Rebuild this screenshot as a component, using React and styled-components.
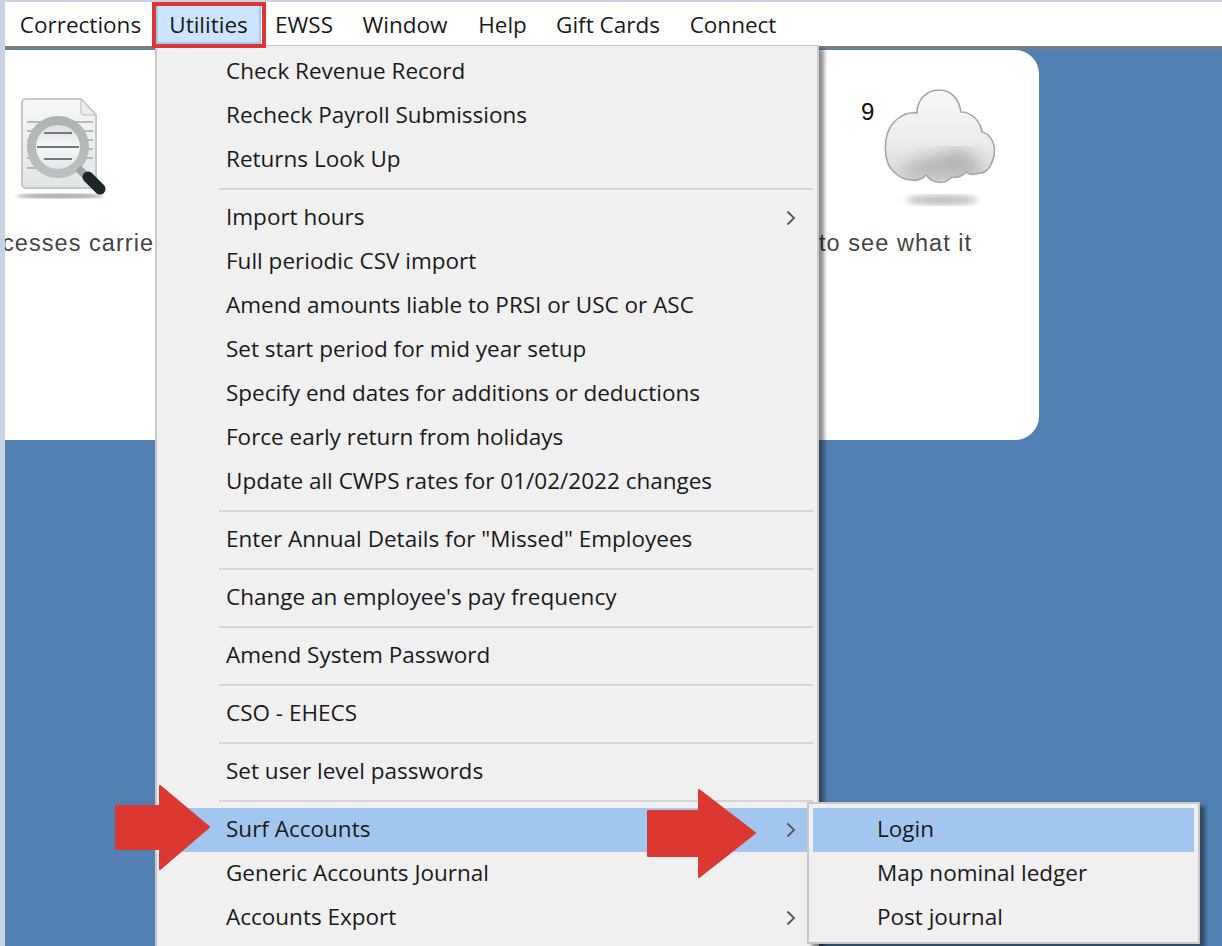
import styled, { createGlobalStyle } from 'styled-components'

const GlobalStyle = createGlobalStyle`
  html, body {
    margin: 0;
    padding: 0;
    background: #c8d4e4;
  }
`;

const UI_FONT = `"Open Sans", "Noto Sans", sans-serif`;

const Page = styled.div`
  position: relative;
  width: 1222px;
  height: 946px;
  overflow: hidden;
  padding: 2px 0 0 5px;
  box-sizing: border-box;
  display: flex;
  flex-direction: column;
  background: #c8d4e4;
  font-family: ${UI_FONT};
`;

const MenuBar = styled.div`
  display: flex;
  height: 44px;
  flex: none;
  background: #fff;
  border-bottom: 3px solid #7d7d7d;
  box-sizing: content-box;
`;

const BarItem = styled.div`
  position: relative;
  display: flex;
  align-items: center;
  justify-content: center;
  width: ${({ $w }) => $w}px;
  font-size: 22.5px;
  color: #1a1a1a;
  ${({ $active }) => $active && `
    background: #cce4fd;
    box-shadow: inset 2px 0 #a0c8f2, inset -2px 0 #a0c8f2, inset 0 -4px #a0c8f2;
    &::after {
      content: '';
      position: absolute;
      inset: 0 -5px -2px -4px;
      border: 4px solid #dc3533;
      z-index: 2;
    }
  `}
`;

const Workspace = styled.div`
  flex: 1;
  background: #5380b3;
  padding-top: 1px;
`;

const Card = styled.div`
  width: 1034px;
  height: 390px;
  background: #fff;
  border-radius: 0 24px 24px 0;
  display: flex;
  justify-content: space-between;
  overflow: hidden;
`;

const Panel = styled.div`
  display: flex;
  flex-direction: column;
  width: ${({ $w }) => $w}px;
  padding-top: ${({ $top }) => $top}px;
  box-sizing: border-box;
  overflow: hidden;
`;

const IconRow = styled.div`
  display: flex;
  height: ${({ $h }) => $h}px;
  padding-left: ${({ $left }) => $left}px;
`;

const Number = styled.span`
  font-family: "Liberation Sans", sans-serif;
  font-size: 24px;
  line-height: 24px;
  width: 18px;
  margin-top: 15px;
  color: #111;
`;

const Caption = styled.div`
  font-family: "Liberation Sans", sans-serif;
  font-size: 23.5px;
  letter-spacing: 1.05px;
  line-height: 30px;
  color: #444;
  white-space: nowrap;
  margin-left: ${({ $shift }) => $shift || 0}px;
`;

const Menu = styled.div`
  position: absolute;
  left: 155px;
  top: 45px;
  width: 664px;
  height: 920px;
  box-sizing: border-box;
  padding: 4px 4px 0 4px;
  background: #f0f0f0;
  border: 2px solid #c9c9c9;
  border-top-width: 1px;
  box-shadow: 5px 4px 4px rgba(0, 0, 0, 0.45);
  font-size: 22.5px;
  color: #1a1a1a;
`;

const Row = styled.div`
  display: flex;
  align-items: center;
  justify-content: space-between;
  height: 44px;
  box-sizing: border-box;
  padding: 0 17px 4px ${({ $indent }) => $indent}px;
  background: ${({ $hot }) => ($hot ? '#a3c6ef' : 'transparent')};
`;

const Separator = styled.div`
  height: 2px;
  margin: 6px 0 6px 58px;
  background: #d4d4d4;
`;

const Submenu = styled.div`
  position: absolute;
  left: 650px;
  top: 756px;
  width: 393px;
  height: 142px;
  box-sizing: border-box;
  padding: 4px;
  background: #f0f0f0;
  border: 2px solid #c9c9c9;
  box-shadow: 5px 4px 4px rgba(0, 0, 0, 0.45);
`;

const Chevron = styled.svg`
  width: 10px;
  height: 16px;
  flex: none;
  margin-top: 4px;
`;

const Pointer = styled.svg`
  position: absolute;
  left: ${({ $x }) => $x}px;
  top: ${({ $y }) => $y}px;
`;

const barItems = [
  ['Corrections', 151], ['Utilities', 105], ['EWSS', 86], ['Window', 116],
  ['Help', 79], ['Gift Cards', 132], ['Connect', 118],
];

const menuGroups = [
  [{ t: 'Check Revenue Record' }, { t: 'Recheck Payroll Submissions' }, { t: 'Returns Look Up' }],
  [
    { t: 'Import hours', more: true },
    { t: 'Full periodic CSV import' },
    { t: 'Amend amounts liable to PRSI or USC or ASC' },
    { t: 'Set start period for mid year setup' },
    { t: 'Specify end dates for additions or deductions' },
    { t: 'Force early return from holidays' },
    { t: 'Update all CWPS rates for 01/02/2022 changes' },
  ],
  [{ t: 'Enter Annual Details for "Missed" Employees' }],
  [{ t: "Change an employee's pay frequency" }],
  [{ t: 'Amend System Password' }],
  [{ t: 'CSO - EHECS' }],
  [{ t: 'Set user level passwords' }],
  [
    { t: 'Surf Accounts', more: true, hot: true },
    { t: 'Generic Accounts Journal' },
    { t: 'Accounts Export', more: true },
  ],
];

const CLOUD_PATH = 'M15 87 C4 78 3 50 15 37 C22 30 30 27 38 28 C38 14 48 5 60 5 C72 5 80 14 82 27 C92 27 101 35 103 47 C112 49 117 60 115 70 C113 82 106 89 100 88 C96 90 90 90 87 87 C84 91 78 93 73 92 C69 96 64 98 60 97 C55 97 50 94 47 90 C43 95 36 96 33 95 C26 95 20 92 15 87 Z';

const More = () => (
  <Chevron viewBox="0 0 10 16">
    <path d="M1.5 1.5 L8 8 L1.5 14.5" fill="none" stroke="#555" strokeWidth="1.8" />
  </Chevron>
);

const DocIcon = () => (
  <svg width="100" height="112" viewBox="0 0 100 112">
    <defs>
      <linearGradient id="docFill" x1="0" y1="0" x2="0" y2="1">
        <stop offset="0" stopColor="#f6f7f7" />
        <stop offset="1" stopColor="#e2e5e6" />
      </linearGradient>
      <linearGradient id="ring" x1="0" y1="0" x2="0" y2="1">
        <stop offset="0" stopColor="#aeb3b3" />
        <stop offset="1" stopColor="#bcc0c0" />
      </linearGradient>
      <linearGradient id="lens" x1="0" y1="0" x2="0" y2="1">
        <stop offset="0" stopColor="#d6d9d9" />
        <stop offset="0.5" stopColor="#f7f7f7" />
        <stop offset="1" stopColor="#dfe2e2" />
      </linearGradient>
      <filter id="soft"><feGaussianBlur stdDeviation="1.6" /></filter>
      <filter id="iconSoft"><feGaussianBlur stdDeviation="0.5" /></filter>
    </defs>
    <ellipse cx="46" cy="104" rx="44" ry="2.5" fill="#a5a8a8" filter="url(#soft)" />
    <g filter="url(#iconSoft)">
      <path d="M12 7 H67 L82 23 V92 Q82 96 78 96 H12 Q8 96 8 92 V11 Q8 7 12 7 Z" fill="url(#docFill)" stroke="#c6cacc" strokeWidth="2" />
      <path d="M67 7 V20 Q67 23 70 23 H82 Z" fill="#eceeee" stroke="#b3b8ba" strokeWidth="1" />
      <path d="M13 30 H79 M13 39 H79 M13 48 H79 M13 57 H79 M13 66 H79 M13 76 H40" stroke="#a2a8ab" strokeWidth="1.6" />
      <circle cx="44" cy="55" r="26.5" fill="url(#lens)" stroke="url(#ring)" strokeWidth="9" />
      <path d="M30 41 H58 M23 55 H65 M30 67 H58" stroke="#6f797d" strokeWidth="2" />
      <path d="M64 76 L72 84" stroke="#a0a5a5" strokeWidth="8" />
      <path d="M74 85 L86 97" stroke="#1f272a" strokeWidth="11" strokeLinecap="round" />
    </g>
  </svg>
);

const CloudIcon = () => (
  <svg width="125" height="128" viewBox="0 0 125 128">
    <defs>
      <linearGradient id="cloudFill" x1="0" y1="0" x2="0" y2="1">
        <stop offset="0" stopColor="#f7f7f7" />
        <stop offset="0.55" stopColor="#ececec" />
        <stop offset="1" stopColor="#d8d8d8" />
      </linearGradient>
      <filter id="cloudBlur"><feGaussianBlur stdDeviation="3" /></filter>
      <filter id="cloudShade"><feGaussianBlur stdDeviation="8" /></filter>
      <filter id="cloudEdge"><feGaussianBlur stdDeviation="0.5" /></filter>
      <clipPath id="cloudClip">
        <path d={CLOUD_PATH} />
      </clipPath>
    </defs>
    <ellipse cx="63" cy="115" rx="36" ry="5" fill="#bcbcbc" filter="url(#cloudBlur)" />
    <g filter="url(#cloudEdge)">
      <path d={CLOUD_PATH} fill="url(#cloudFill)" />
      <g clipPath="url(#cloudClip)">
        <path d="M20 92 C24 72 55 74 70 66 C85 60 100 70 104 92 Z" fill="#b4b4b4" filter="url(#cloudShade)" />
      </g>
      <path d={CLOUD_PATH} fill="none" stroke="#a6a6a6" strokeWidth="1.6" />
    </g>
  </svg>
);

export default function App() {
  return (
    <>
      <GlobalStyle />
      <Page>
        <MenuBar>
          {barItems.map(([label, w]) => (
            <BarItem key={label} $w={w} $active={label === 'Utilities'}>{label}</BarItem>
          ))}
        </MenuBar>
        <Workspace>
          <Card>
            <Panel $w={150} $top={42}>
              <IconRow $h={136} $left={9}><DocIcon /></IconRow>
              <Caption $shift={-3}>cesses carrie</Caption>
            </Panel>
            <Panel $w={220} $top={35}>
              <IconRow $h={143} $left={42}><Number>9</Number><CloudIcon /></IconRow>
              <Caption>to see what it</Caption>
            </Panel>
          </Card>
        </Workspace>
        <Menu>
          {menuGroups.map((group, i) => (
            <div key={i}>
              {i > 0 && <Separator />}
              {group.map((item) => (
                <Row key={item.t} $indent={65} $hot={item.hot}>
                  <span>{item.t}</span>
                  {item.more && <More />}
                </Row>
              ))}
            </div>
          ))}
          <Submenu>
            <Row $indent={64} $hot>Login</Row>
            <Row $indent={64}>Map nominal ledger</Row>
            <Row $indent={64}>Post journal</Row>
          </Submenu>
        </Menu>
        <Pointer $x={114} $y={784} width="98" height="88" viewBox="114 784 98 88">
          <polygon points="116,806 160,806 160,786 209,827 160,869 160,849 116,849" fill="#db3832" stroke="#db3832" strokeWidth="2" strokeLinejoin="round" />
        </Pointer>
        <Pointer $x={646} $y={788} width="112" height="92" viewBox="646 788 112 92">
          <polygon points="648,811 699,811 699,790 755,833 699,877 699,856 648,856" fill="#db3832" stroke="#db3832" strokeWidth="2" strokeLinejoin="round" />
        </Pointer>
      </Page>
    </>
  );
}
